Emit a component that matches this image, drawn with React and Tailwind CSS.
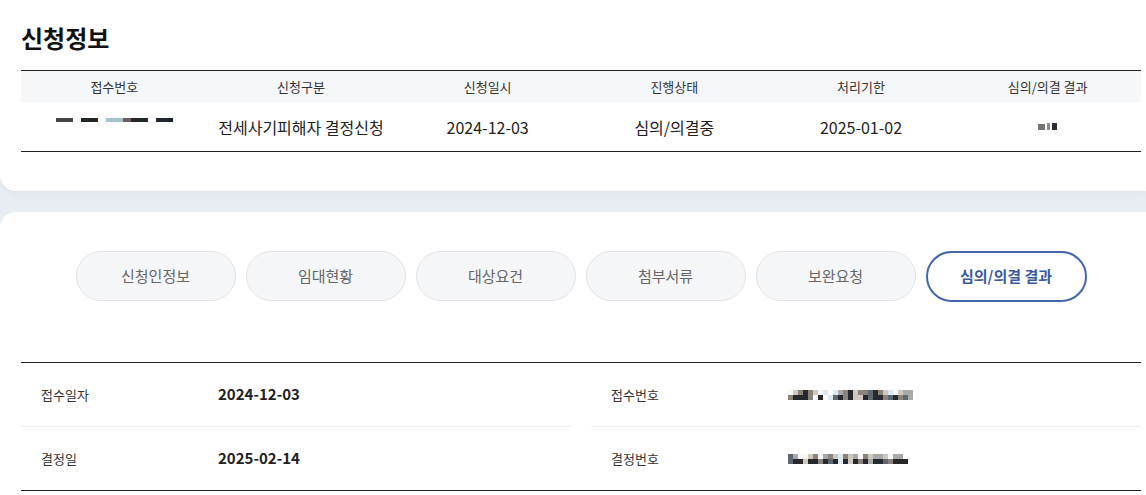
import React from 'react';

const font = { fontFamily: '"Noto Sans CJK KR", "Noto Sans", sans-serif' };

const headers = ['접수번호', '신청구분', '신청일시', '진행상태', '처리기한', '심의/의결 결과'];
const tabs = ['신청인정보', '임대현황', '대상요건', '첨부서류', '보완요청', '심의/의결 결과'];

// masked pixel colours
const px = {
  w: 'bg-[#f7f7f7]',
  l: 'bg-[#cfc8bf]',
  m: 'bg-[#8a837c]',
  d: 'bg-[#26282b]',
  b: 'bg-[#dde8f0]',
  s: 'bg-[#5d6871]',
  g: 'bg-[#a9a9a9]',
  n: 'bg-transparent',
};

const Masked = ({ rows }) => (
  <div className="flex flex-col">
    {rows.map((row, i) => (
      <div key={i} className="flex">
        {row.split('').map((c, j) => (
          <div key={j} className={`w-[5px] h-[5px] ${px[c]}`} />
        ))}
      </div>
    ))}
  </div>
);

const TopMask = () => (
  <div className="flex items-center mb-[14px]">
    <div className="w-[17px] h-[4px] bg-[#4a4447]" />
    <div className="w-[17px] h-[4px] bg-[#1f2427] ml-[8px]" />
    <div className="w-[17px] h-[4px] bg-[#a6c2cc] ml-[8px]" />
    <div className="w-[8px] h-[4px] bg-[#6a5c62]" />
    <div className="w-[17px] h-[4px] bg-[#25282b]" />
    <div className="w-[17px] h-[4px] bg-[#1f2530] ml-[8px]" />
  </div>
);

const ResultMask = () => (
  <div className="flex items-end gap-[2px]">
    <div className="w-[7px] h-[6px] bg-[#767676]" />
    <div className="w-[3px] h-[7px] bg-[#8c8c8c]" />
    <div className="w-[5px] h-[7px] bg-[#2b3038]" />
  </div>
);

const InfoCell = ({ label, children }) => (
  <div className="flex items-center h-[63px] pl-[20px]">
    <div className="w-[177px] text-[13px] text-[#333]">{label}</div>
    <div className="text-[15px] font-semibold text-[#222]">{children}</div>
  </div>
);

export default function App() {
  return (
    <div className="min-h-screen bg-[#e8ecf3] overflow-hidden" style={font}>
      <div className="bg-white rounded-bl-2xl shadow-[0_3px_6px_rgba(0,0,0,0.04)] px-[21px] pt-[22px] pb-[39px]">
        <h2 className="text-[24px] font-bold text-[#111] leading-[32px] mb-[16px]">신청정보</h2>
        <div className="w-[1120px] border-t border-b border-[#222]">
          <div className="grid grid-cols-6 bg-[#f6f7f9] h-[31px] items-center text-[13px] text-[#333] text-center">
            {headers.map((h) => (
              <div key={h}>{h}</div>
            ))}
          </div>
          <div className="grid grid-cols-6 h-[49px] items-center text-[16px] text-[#222] text-center">
            <div className="flex justify-center"><TopMask /></div>
            <div>전세사기피해자 결정신청</div>
            <div>2024-12-03</div>
            <div>심의/의결중</div>
            <div>2025-01-02</div>
            <div className="flex justify-center"><ResultMask /></div>
          </div>
        </div>
      </div>

      <div className="bg-white rounded-tl-2xl mt-[21px] px-[21px] pt-[39px] pb-[10px]">
        <div className="w-[1120px] flex justify-center gap-[10px]">
          {tabs.map((t, i) =>
            i === tabs.length - 1 ? (
              <button
                key={t}
                className="w-[161px] h-[51px] rounded-full border-2 border-[#4466ad] bg-white text-[15px] font-bold text-[#3a5a9f]"
              >
                {t}
              </button>
            ) : (
              <button
                key={t}
                className="w-[160px] h-[50px] rounded-full border border-[#e1e3e6] bg-[#f5f6f8] text-[15px] text-[#666]"
              >
                {t}
              </button>
            )
          )}
        </div>

        <div className="w-[1120px] mt-[60px] border-t border-b border-[#222] grid grid-cols-2 gap-x-[20px]">
          <div className="border-b border-[#eceef1]">
            <InfoCell label="접수일자">2024-12-03</InfoCell>
          </div>
          <div className="border-b border-[#eceef1]">
            <InfoCell label="접수번호">
              <Masked rows={['wlmdmlwbnbgmdlmmsdmlbwlgg', 'mdddmwdnbsdmdlldsddmsdmsg']} />
            </InfoCell>
          </div>
          <InfoCell label="결정일">2025-02-14</InfoCell>
          <InfoCell label="결정번호">
            <Masked rows={['sgwwlmwgmlbmlgwmlgglwgg', 'sddlddmdsdbdldmdgddsmddd']} />
          </InfoCell>
        </div>
      </div>
    </div>
  );
}
